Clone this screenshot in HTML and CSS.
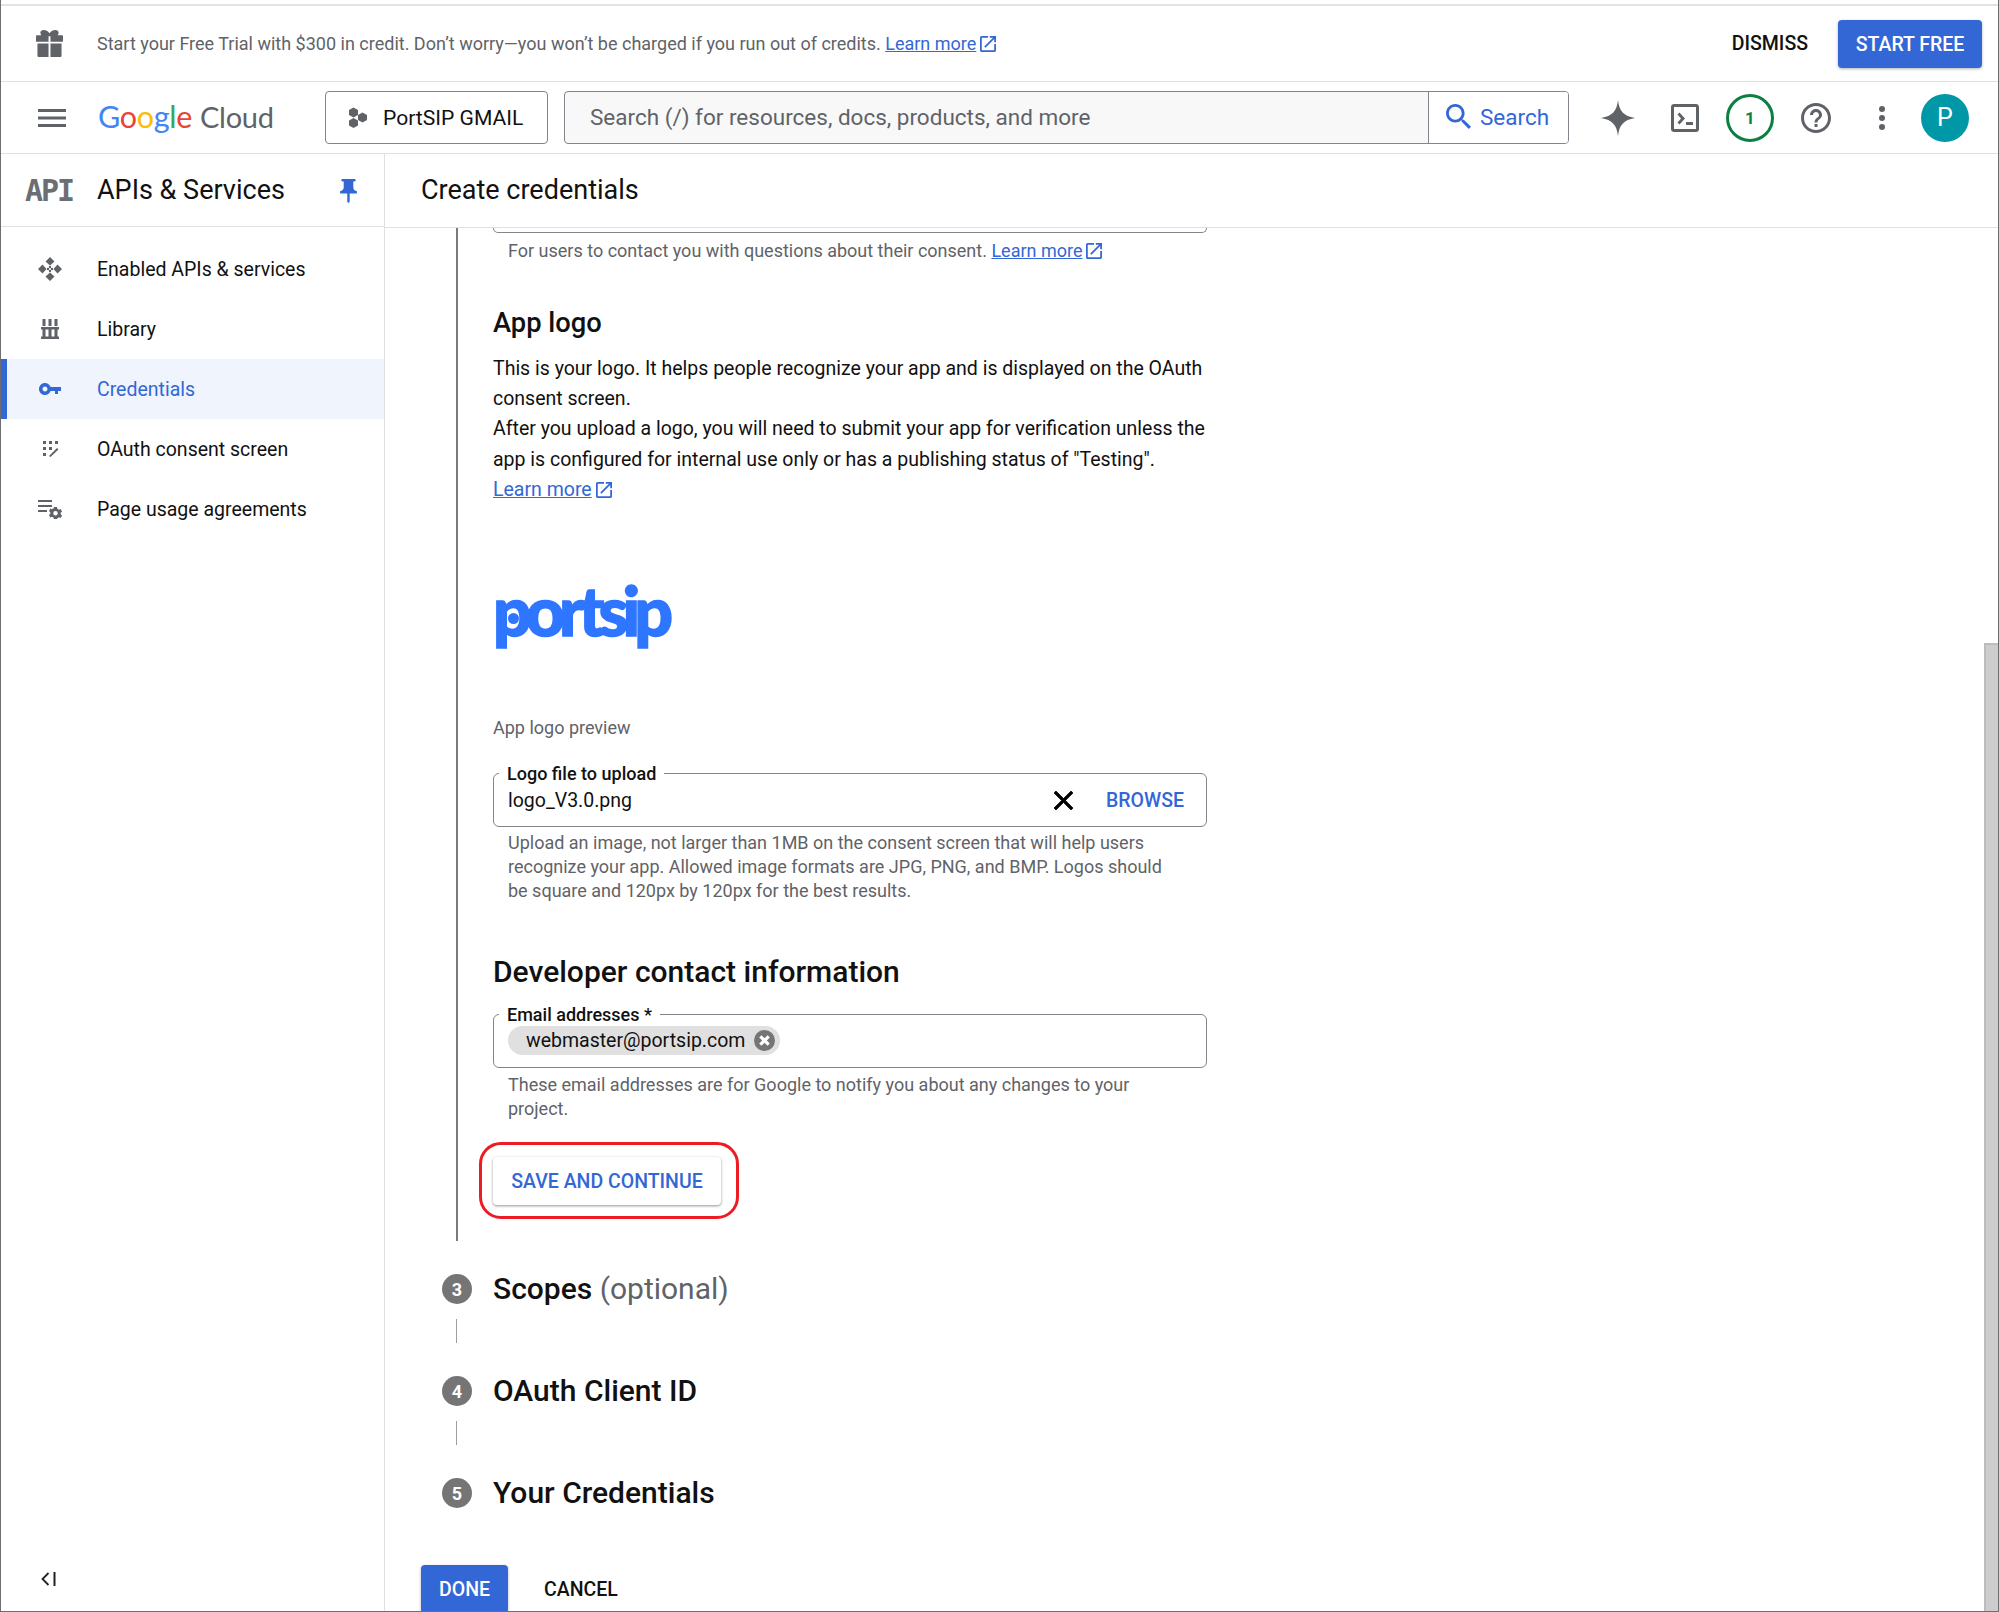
FILE: index.html
```html
<!DOCTYPE html>
<html lang="en">
<head>
<meta charset="utf-8">
<title>Create credentials</title>
<link rel="stylesheet" href="styles.css">
</head>
<body>
<div class="frame">
  <header class="banner">
    <svg class="gift" viewBox="0 0 28 30" preserveAspectRatio="none"><path d="M8 0c2.2 0 4.300 1.100 6 3.500C15.700 1.100 17.800 0 20 0c2 0 3.500 1.300 3.500 3 0 1-.4 2-1.100 2.700H27c.6 0 1 .4 1 1V13H15V7h-2v6H0V6.700c0-.6.400-1 1-1h4.600C4.900 5 4.500 4 4.500 3 4.500 1.300 6 0 8 0zM1.500 15H13v15H3c-.8 0-1.500-.7-1.500-1.500zM15 15h11.500v13.500c0 .8-.7 1.500-1.500 1.500H15z"/></svg>
    <p class="banner-text">Start your Free Trial with $300 in credit. Don’t worry—you won’t be charged if you run out of credits. <a class="link">Learn more</a><svg class="ext" viewBox="3 3 18 18"><path d="M19 19H5V5h7V3H5c-1.110 0-2 .9-2 2v14c0 1.100.89 2 2 2h14c1.100 0 2-.9 2-2v-7h-2v7zM14 3v2h3.590l-9.830 9.830 1.410 1.410L19 6.410V10h2V3h-7z"/></svg></p>
    <button class="btn-text dismiss">DISMISS</button>
    <button class="btn-primary start">START FREE</button>
  </header>

  <nav class="topnav">
    <svg class="burger" viewBox="0 0 28 20"><path d="M0 1h28v3H0zM0 8.500h28v3H0zM0 16h28v3H0z"/></svg>
    <div class="brand"><span class="g-b">G</span><span class="g-r">o</span><span class="g-y">o</span><span class="g-b">g</span><span class="g-g">l</span><span class="g-r">e</span><span class="brand-cloud">Cloud</span></div>
    <button class="project">
      <svg class="hex" viewBox="0 0 20 20"><path d="M5.500 0l4.500 2.500v5L5.500 10 1 7.500v-5zM14.500 5l4.500 2.500v5L14.500 15 10 12.500v-5zM5.500 10.500l4.500 2.500v5L5.500 20.500 1 18v-5z"/></svg>
      PortSIP GMAIL
    </button>
    <div class="search">
      <span class="search-ph">Search (/) for resources, docs, products, and more</span>
      <span class="search-btn"><svg class="search-ic" viewBox="3 3 17.500 17.500"><path d="M15.500 14h-.79l-.28-.27C15.410 12.590 16 11.110 16 9.500 16 5.910 13.090 3 9.500 3S3 5.910 3 9.500 5.910 16 9.500 16c1.610 0 3.090-.59 4.230-1.570l.27.28v.79l5 4.990L20.490 19l-4.990-5zm-6 0C7.010 14 5 11.990 5 9.500S7.010 5 9.500 5 14 7.010 14 9.500 11.990 14 9.500 14z"/></svg>Search</span>
    </div>
    <div class="tools">
      <svg class="spark" viewBox="0 0 34 36"><path d="M17 0c1.200 11 5.500 16 17 18-11.500 2-15.800 7-17 18-1.200-11-5.500-16-17-18C11.500 16 15.800 11 17 0z"/></svg>
      <svg class="term" viewBox="0 0 28 28"><path fill-rule="evenodd" d="M3 0h22c1.700 0 3 1.300 3 3v22c0 1.700-1.300 3-3 3H3c-1.700 0-3-1.300-3-3V3c0-1.700 1.300-3 3-3zm0 3v22h22V3zm3.500 7.500l2-2 5.500 6-5.500 6-2-2 3.500-4zM15 18h7v3h-7z"/></svg>
      <span class="badge">1</span>
      <svg class="help" viewBox="2 2 20 20"><path d="M11 18h2v-2h-2v2zm1-16C6.480 2 2 6.480 2 12s4.480 10 10 10 10-4.480 10-10S17.520 2 12 2zm0 18c-4.410 0-8-3.590-8-8s3.590-8 8-8 8 3.590 8 8-3.590 8-8 8zm0-14c-2.210 0-4 1.790-4 4h2c0-1.100.9-2 2-2s2 .9 2 2c0 2-3 1.750-3 5h2c0-2.250 3-2.500 3-5 0-2.210-1.790-4-4-4z"/></svg>
      <svg class="kebab" viewBox="0 0 6 24"><circle cx="3" cy="3" r="3"/><circle cx="3" cy="12" r="3"/><circle cx="3" cy="21" r="3"/></svg>
      <span class="avatar">P</span>
    </div>
  </nav>

  <div class="workspace">
    <aside class="sidebar">
      <div class="side-head">
        <span class="api-mark">API</span>
        <h2 class="side-title">APIs &amp; Services</h2>
        <svg class="pin" viewBox="5 2 14 20"><path d="M16 9V4h1c.55 0 1-.45 1-1s-.45-1-1-1H7c-.55 0-1 .45-1 1s.45 1 1 1h1v5c0 1.660-1.340 3-3 3v2h5.970v7l1 1 1-1v-7H19v-2c-1.660 0-3-1.340-3-3z"/></svg>
      </div>
      <ul class="side-list">
        <li class="side-item">
          <span class="side-icon"><svg class="ic-enabled" viewBox="0 0 24 24"><path d="M12 0l4.500 4.500L12 8.500 7.500 4.500zM12 15.500l4.500 4L12 24l-4.500-4.500zM0 12l4.500-4.500L8.500 12l-4 4.500zM15.500 12l4-4.500L24 12l-4.500 4.500z"/><circle cx="12" cy="10" r="1.200"/><circle cx="12" cy="14" r="1.200"/><circle cx="10" cy="12" r="1.200"/><circle cx="14" cy="12" r="1.200"/></svg></span>
          Enabled APIs &amp; services
        </li>
        <li class="side-item">
          <span class="side-icon"><svg class="ic-lib" viewBox="0 0 18 20"><path d="M1.500 0h3v7h-3zM7.500 0h3v7h-3zM13.500 0h3v7h-3zM0 8h18v2.500H0zM1.500 10h3v8h-3zM7.500 10h3v8h-3zM13.500 10h3v8h-3zM0 17.500h18V20H0z"/></svg></span>
          Library
        </li>
        <li class="side-item side-item-on">
          <span class="side-icon"><svg class="ic-key" viewBox="1 6 22 12"><path d="M12.650 10C11.830 7.670 9.610 6 7 6c-3.310 0-6 2.690-6 6s2.690 6 6 6c2.610 0 4.830-1.670 5.650-4H17v3h3v-3h3v-4H12.650zM7 14.500c-1.380 0-2.500-1.120-2.500-2.500s1.120-2.500 2.500-2.500 2.500 1.120 2.500 2.500-1.120 2.500-2.500 2.500z"/></svg></span>
          Credentials
        </li>
        <li class="side-item">
          <span class="side-icon"><svg class="ic-oauth" viewBox="0 0 16 16"><path d="M0 0h3v3H0zM6 0h3v3H6zM12 0h3v3h-3zM0 6h3v3H0zM6 6h3v3H6zM0 12h3v3H0zM6 15l8-8 1.500 1.500-8 7.500z"/></svg></span>
          OAuth consent screen
        </li>
        <li class="side-item">
          <span class="side-icon"><svg class="ic-page" viewBox="0 0 24 20"><path d="M0 1h14v2H0zM0 6h14v2H0zM0 11h9v2H0z"/><path fill-rule="evenodd" d="M16 8h3l.4 1.800 1.600.9 1.700-.6 1.300 2.400-1.300 1.200v1.600l1.300 1.200-1.300 2.400-1.700-.6-1.600.9L19 20.500h-3l-.4-1.800-1.600-.9-1.700.6-1.300-2.400 1.300-1.200V13.200L11 12l1.300-2.400 1.700.6 1.600-.9zM17.500 12a2.200 2.200 0 100 4.500 2.200 2.200 0 000-4.500z"/></svg></span>
          Page usage agreements
        </li>
      </ul>
      <svg class="collapse" viewBox="0 0 14 16"><path d="M7 2L1 8l6 6" fill="none" stroke="#202124" stroke-width="1.800"/><path d="M12 1h2v14h-2z" fill="#202124"/></svg>
    </aside>

    <main class="content">
      <h1 class="page-title">Create credentials</h1>
      <div class="scroller">
        <div class="scroll-body">
          <section class="step-open">
            <div class="field-tail"></div>
            <p class="hint hint-first">For users to contact you with questions about their consent. <a class="link">Learn more</a><svg class="ext" viewBox="3 3 18 18"><path d="M19 19H5V5h7V3H5c-1.110 0-2 .9-2 2v14c0 1.100.89 2 2 2h14c1.100 0 2-.9 2-2v-7h-2v7zM14 3v2h3.590l-9.830 9.830 1.410 1.410L19 6.410V10h2V3h-7z"/></svg></p>
            <h3 class="sec-small">App logo</h3>
            <p class="body-copy">This is your logo. It helps people recognize your app and is displayed on the OAuth consent screen.<br>After you upload a logo, you will need to submit your app for verification unless the app is configured for internal use only or has a publishing status of "Testing".<br><a class="link">Learn more</a><svg class="ext" viewBox="3 3 18 18"><path d="M19 19H5V5h7V3H5c-1.110 0-2 .9-2 2v14c0 1.100.89 2 2 2h14c1.100 0 2-.9 2-2v-7h-2v7zM14 3v2h3.590l-9.830 9.830 1.410 1.410L19 6.410V10h2V3h-7z"/></svg></p>
            <div class="logo-box"><span class="portsip">portsip</span></div>
            <p class="preview-cap">App logo preview</p>
            <div class="field field-logo">
              <span class="field-label">Logo file to upload</span>
              <span class="field-value">logo_V3.0.png</span>
              <svg class="clear" viewBox="5 5 14 14"><path d="M19 6.410L17.590 5 12 10.590 6.410 5 5 6.410 10.590 12 5 17.590 6.410 19 12 13.410 17.590 19 19 17.590 13.410 12z"/></svg>
              <span class="browse">BROWSE</span>
            </div>
            <p class="hint hint-logo">Upload an image, not larger than 1MB on the consent screen that will help users recognize your app. Allowed image formats are JPG, PNG, and BMP. Logos should be square and 120px by 120px for the best results.</p>
            <h3 class="sec-large">Developer contact information</h3>
            <div class="field field-mail">
              <span class="field-label">Email addresses *</span>
              <span class="chip">webmaster@portsip.com<svg class="chip-x" viewBox="0 0 20 20"><circle cx="10" cy="10" r="10" fill="#757575"/><path d="M6 6l8 8M14 6l-8 8" stroke="#fff" stroke-width="3"/></svg></span>
            </div>
            <p class="hint hint-mail">These email addresses are for Google to notify you about any changes to your project.</p>
            <div class="save-wrap">
              <button class="btn-raised">SAVE AND CONTINUE</button>
              <span class="red-mark"></span>
            </div>
          </section>
          <div class="step-row"><span class="step-num">3</span><h3 class="sec-large">Scopes <span class="opt">(optional)</span></h3></div>
          <div class="step-link"></div>
          <div class="step-row"><span class="step-num">4</span><h3 class="sec-large">OAuth Client ID</h3></div>
          <div class="step-link"></div>
          <div class="step-row"><span class="step-num">5</span><h3 class="sec-large">Your Credentials</h3></div>
          <div class="actions">
            <button class="btn-primary done">DONE</button>
            <button class="btn-text cancel">CANCEL</button>
          </div>
        </div>
        <div class="scrollbar"><div class="thumb"></div></div>
      </div>
    </main>
  </div>
</div>
</body>
</html>
```

FILE: styles.css
```css
* { box-sizing: border-box; }
html, body { margin: 0; padding: 0; height: 100%; overflow: hidden; background: #fff; }
body { font-family: Roboto, "Liberation Sans", sans-serif; color: #111; }
p, h1, h2, h3, ul { margin: 0; padding: 0; }
ul { list-style: none; }
button { font-family: inherit; border: 0; background: none; padding: 0; cursor: pointer; }
svg { display: block; flex: none; }

.frame {
  width: 1999px; height: 1612px;
  display: flex; flex-direction: column;
  border: 1px solid #6e6e72; border-top: 0;
  overflow: hidden;
  padding-top: 4px;
}
.link { color: #3367d6; text-decoration: underline; }
.ext { display: inline-block; width: 16px; height: 16px; fill: #3367d6; margin-left: 4px; vertical-align: -2px; }

/* banner */
.banner {
  height: 78px; flex: none;
  border-top: 2px solid #e3e3e3; border-bottom: 1px solid #e0e0e0;
  display: flex; align-items: center;
  padding: 0 16px 0 35px;
}
.gift { width: 27px; height: 27px; fill: #5f6368; margin-right: 34px; }
.banner-text { font-size: 18px; color: #5f6368; flex: 1; }
.btn-text { font-size: 19.500px; font-weight: 500; color: #111; }
.dismiss { margin-right: 30px; }
.btn-primary {
  background: #3367d6; color: #fff; font-size: 19.500px; font-weight: 500; border-radius: 4px;
  box-shadow: 0 1px 3px rgba(60,64,67,.4);
}
.start { width: 144px; height: 48px; padding-top: 1px; }

/* top nav */
.topnav {
  height: 72px; flex: none;
  border-bottom: 1px solid #e0e0e0;
  display: flex; align-items: center;
  padding: 0 29px 0 37px;
}
.burger { width: 28px; height: 20px; fill: #5f6368; margin-right: 32px; flex: none; }
.brand { font-family: Lato, sans-serif; font-size: 30.500px; line-height: 36px; width: 227px; flex: none; letter-spacing: -.3px; padding-bottom: 2px; }
.g-b { color: #4285f4; } .g-r { color: #ea4335; } .g-y { color: #fbbc05; } .g-g { color: #34a853; }
.brand-cloud { color: #5f6368; margin-left: 8px; font-size: 29px; }
.project {
  width: 223px; height: 53px; flex: none; display: flex; align-items: center;
  border: 1px solid #80868b; border-radius: 4px;
  font-size: 21.100px; color: #111; padding-left: 22px; margin-right: 16px;
}
.hex { width: 20px; height: 21px; fill: #5f6368; margin-right: 15px; }
.search {
  width: 1005px; height: 53px; flex: none; display: flex;
  border: 1px solid #80868b; border-radius: 4px; background: #f8f8f8;
  overflow: hidden;
}
.search-ph { flex: 1; font-size: 22.500px; color: #5f6368; line-height: 51px; padding-left: 25px; }
.search-btn {
  width: 140px; background: #fff; border-left: 1px solid #80868b;
  display: flex; align-items: center; color: #3367d6; font-size: 22.500px; padding: 0 0 2px 17px;
}
.search-ic { width: 25px; height: 25px; fill: #3367d6; margin-right: 9px; }
.tools { display: flex; align-items: center; margin-left: 32px; }
.spark { width: 34px; height: 36px; fill: #5f6368; margin-right: 36px; }
.term { width: 28px; height: 28px; fill: #5f6368; margin-right: 27px; }
.badge {
  width: 48px; height: 48px; border: 3px solid #0b8043; border-radius: 50%;
  display: flex; align-items: center; justify-content: center;
  color: #0b8043; font-size: 17px; font-weight: 700; margin-right: 27px;
}
.help { width: 30px; height: 30px; fill: #5f6368; margin-right: 48px; }
.kebab { width: 6px; height: 24px; fill: #5f6368; margin-right: 36px; }
.avatar {
  width: 48px; height: 48px; border-radius: 50%; background: #0097a7; color: #fff;
  display: flex; align-items: center; justify-content: center; font-size: 25px;
}

/* workspace */
.workspace { flex: 1; display: flex; min-height: 0; }
.sidebar { width: 384px; flex: none; border-right: 1px solid #e0e0e0; position: relative; }
.side-head { height: 73px; border-bottom: 1px solid #e0e0e0; display: flex; align-items: center; padding-left: 24px; }
.api-mark { width: 72px; font-family: "DejaVu Sans Mono", monospace; font-weight: 700; font-size: 30px; color: #6b6e72; letter-spacing: -2px; }
.side-title { font-size: 27px; font-weight: 400; color: #111; width: 243px; }
.pin { width: 17px; height: 24px; fill: #3367d6; margin-top: 2px; }
.side-list { padding-top: 12px; }
.side-item { height: 60px; display: flex; align-items: center; font-size: 19.500px; color: #111; padding-left: 37px; }
.side-icon { width: 59px; display: flex; }
.side-icon svg { fill: #5f6368; }
.ic-enabled { width: 24px; height: 24px; }
.ic-lib { width: 18px; height: 20px; margin-left: 3px; }
.ic-key { width: 22px; height: 12px; margin-left: 1px; }
.ic-oauth { width: 16px; height: 16px; margin-left: 5px; }
.ic-page { width: 24px; height: 20px; }
.side-item-on { background: #eff4fd; color: #3367d6; box-shadow: inset 6px 0 0 #3367d6; }
.side-item-on .side-icon svg { fill: #3367d6; }
.collapse { position: absolute; left: 40px; bottom: 24px; width: 15px; height: 16px; }

/* content */
.content { flex: 1; min-width: 0; display: flex; flex-direction: column; }
.page-title { height: 74px; flex: none; font-size: 27px; font-weight: 400; line-height: 72px; padding-left: 36px; color: #111; border-bottom: 1px solid #e0e0e0; }
.scroller { flex: 1; display: flex; min-height: 0; overflow: hidden; }
.scroll-body { flex: 1; min-width: 0; padding-left: 71px; }
.scrollbar { width: 14px; flex: none; padding-top: 415px; }
.thumb { height: 100%; background: #cdcdcd; border-left: 2px solid #bdbdbd; border-top: 2px solid #bdbdbd; }

.step-open { border-left: 2px solid #7b7b7b; width: 751px; padding-left: 35px; height: 1013px; }
.field-tail { height: 5px; width: 714px; border: 1px solid #80868b; border-top: 0; border-radius: 0 0 6px 6px; }
.hint { font-size: 18px; line-height: 24px; color: #5f6368; padding-left: 15px; width: 670px; }
.hint-first { margin-top: 6px; white-space: nowrap; }
.sec-small { font-size: 27.300px; font-weight: 500; color: #111; line-height: 32px; margin-top: 44px; }
.body-copy { font-size: 19.500px; line-height: 30.200px; color: #111; width: 714px; margin-top: 15px; }
.logo-box { height: 86px; margin-top: 68px; display: flex; align-items: flex-start; }
.portsip {
  position: relative;
  font-family: Lato, sans-serif; font-weight: 900; font-size: 68px; line-height: 74px;
  color: #2e76ff; letter-spacing: -6px; -webkit-text-stroke: 1.500px #2e76ff;
}
.portsip::after {
  content: ""; position: absolute; left: 15px; top: 40px; width: 11px; height: 11px;
  border-radius: 50%; background: #2e76ff;
}
.preview-cap { font-size: 18px; line-height: 24px; color: #5f6368; margin-top: 57px; }
.field {
  position: relative; width: 714px; height: 54px;
  border: 1px solid #80868b; border-radius: 6px;
}
.field-logo { margin-top: 33px; display: flex; align-items: center; padding: 0 22px 0 14px; }
.field-label {
  position: absolute; left: 5px; top: -11px; background: #fff; padding: 0 8px;
  font-size: 18px; line-height: 22px; font-weight: 500; color: #111;
}
.field-value { flex: 1; font-size: 19.500px; color: #111; }
.clear { width: 19px; height: 19px; fill: #000; stroke: #000; stroke-width: .6; margin-right: 33px; }
.browse { color: #3367d6; font-size: 19.500px; font-weight: 500; }
.hint-logo { margin-top: 4px; }
.sec-large { font-size: 30px; line-height: 38px; font-weight: 500; color: #111; }
.step-open > .sec-large { margin-top: 50px; }
.field-mail { margin-top: 23px; padding: 11px 0 0 14px; }
.chip {
  display: inline-flex; align-items: center; height: 29px; width: 272px;
  background: #e0e0e0; border-radius: 15px; padding-left: 18px;
  font-size: 19.500px; color: #111;
}
.chip-x { width: 21px; height: 21px; margin-left: auto; margin-right: 5px; }
.hint-mail { margin-top: 5px; }
.save-wrap { position: relative; margin-top: 36px; width: 228px; height: 48px; }
.btn-raised {
  width: 228px; height: 48px; border-radius: 4px; background: #fff; color: #3367d6;
  font-size: 19.500px; font-weight: 500;
  box-shadow: 0 1px 3px rgba(60,64,67,.4), 0 1px 2px rgba(60,64,67,.2);
}
.red-mark {
  position: absolute; left: -14px; top: -15px; width: 260px; height: 77px;
  border: 3px solid #ed1c24; border-radius: 22px; pointer-events: none;
}

.step-row { display: flex; align-items: center; height: 30px; margin-left: -14px; }
.step-open + .step-row { margin-top: 33px; }
.step-num {
  width: 30px; height: 30px; border-radius: 50%; background: #757575; color: #fff;
  font-size: 18px; font-weight: 700; display: flex; align-items: center; justify-content: center;
  margin-right: 21px;
}
.opt { color: #5f6368; font-weight: 400; }
.step-link { width: 1px; height: 24px; background: #9e9e9e; margin: 15px 0 33px 0; }
.actions { display: flex; align-items: center; margin: 57px 0 0 -35px; }
.done { width: 87px; height: 48px; }
.cancel { margin-left: 36px; }
```
